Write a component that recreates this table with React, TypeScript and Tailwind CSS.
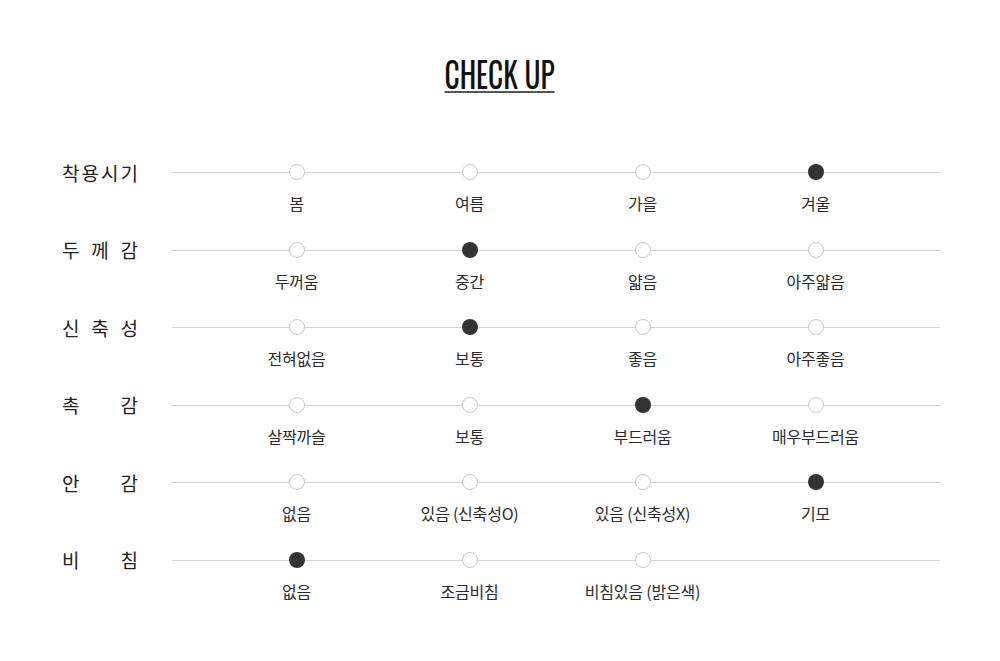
const rows = [
  { label: '착용시기', options: ['봄', '여름', '가을', '겨울'], active: 3 },
  { label: '두께감', options: ['두꺼움', '중간', '얇음', '아주얇음'], active: 1 },
  { label: '신축성', options: ['전혀없음', '보통', '좋음', '아주좋음'], active: 1 },
  { label: '촉감', options: ['살짝까슬', '보통', '부드러움', '매우부드러움'], active: 2 },
  { label: '안감', options: ['없음', '있음 (신축성O)', '있음 (신축성X)', '기모'], active: 3 },
  { label: '비침', options: ['없음', '조금비침', '비침있음 (밝은색)'], active: 0 },
]

const kr = "font-['Noto_Sans_CJK_KR','Noto_Sans',sans-serif]"

function Row({ label, options, active }: { label: string; options: string[]; active: number }) {
  return (
    <div className="h-[77.6px]">
      <div className="flex h-4 items-center">
        <div className="flex w-[76px] justify-between text-[19px] leading-none text-[#222]">
          {label.split('').map((ch, i) => (
            <span key={i}>{ch}</span>
          ))}
        </div>
        <div className="relative ml-[34px] flex h-4 w-[768px] items-center pl-[38px]">
          <div className="absolute left-0 right-0 top-1/2 h-px bg-[#d4d4d4]" />
          <div className="relative grid grid-cols-[repeat(4,173px)]">
            {options.map((o, i) => (
              <div key={o} className="flex justify-center">
                {i === active ? (
                  <span className="h-4 w-4 rounded-full bg-[#333]" />
                ) : (
                  <span className="h-4 w-4 rounded-full border border-[#c8c8c8] bg-white" />
                )}
              </div>
            ))}
          </div>
        </div>
      </div>
      <div className="ml-[148px] mt-[13px] grid grid-cols-[repeat(4,173px)] text-[16px] leading-5 tracking-[-0.2px] text-[#2a2a2a]">
        {options.map((o) => (
          <div key={o} className="text-center">
            {o}
          </div>
        ))}
      </div>
    </div>
  )
}

export default function App() {
  return (
    <div className={`h-[661px] w-[1000px] bg-white ${kr}`}>
      <div className="flex justify-center pt-[55px]">
        <h1 className="origin-center scale-x-[0.84] border-b-2 border-[#555] pb-[0px] font-['Oswald','Liberation_Sans_Narrow','Liberation_Sans',sans-serif] text-[35px] leading-[36px] text-[#111]">
          CHECK UP
        </h1>
      </div>
      <div className="ml-[62px] mt-[71px]">
        {rows.map((r) => (
          <Row key={r.label} {...r} />
        ))}
      </div>
    </div>
  )
}
